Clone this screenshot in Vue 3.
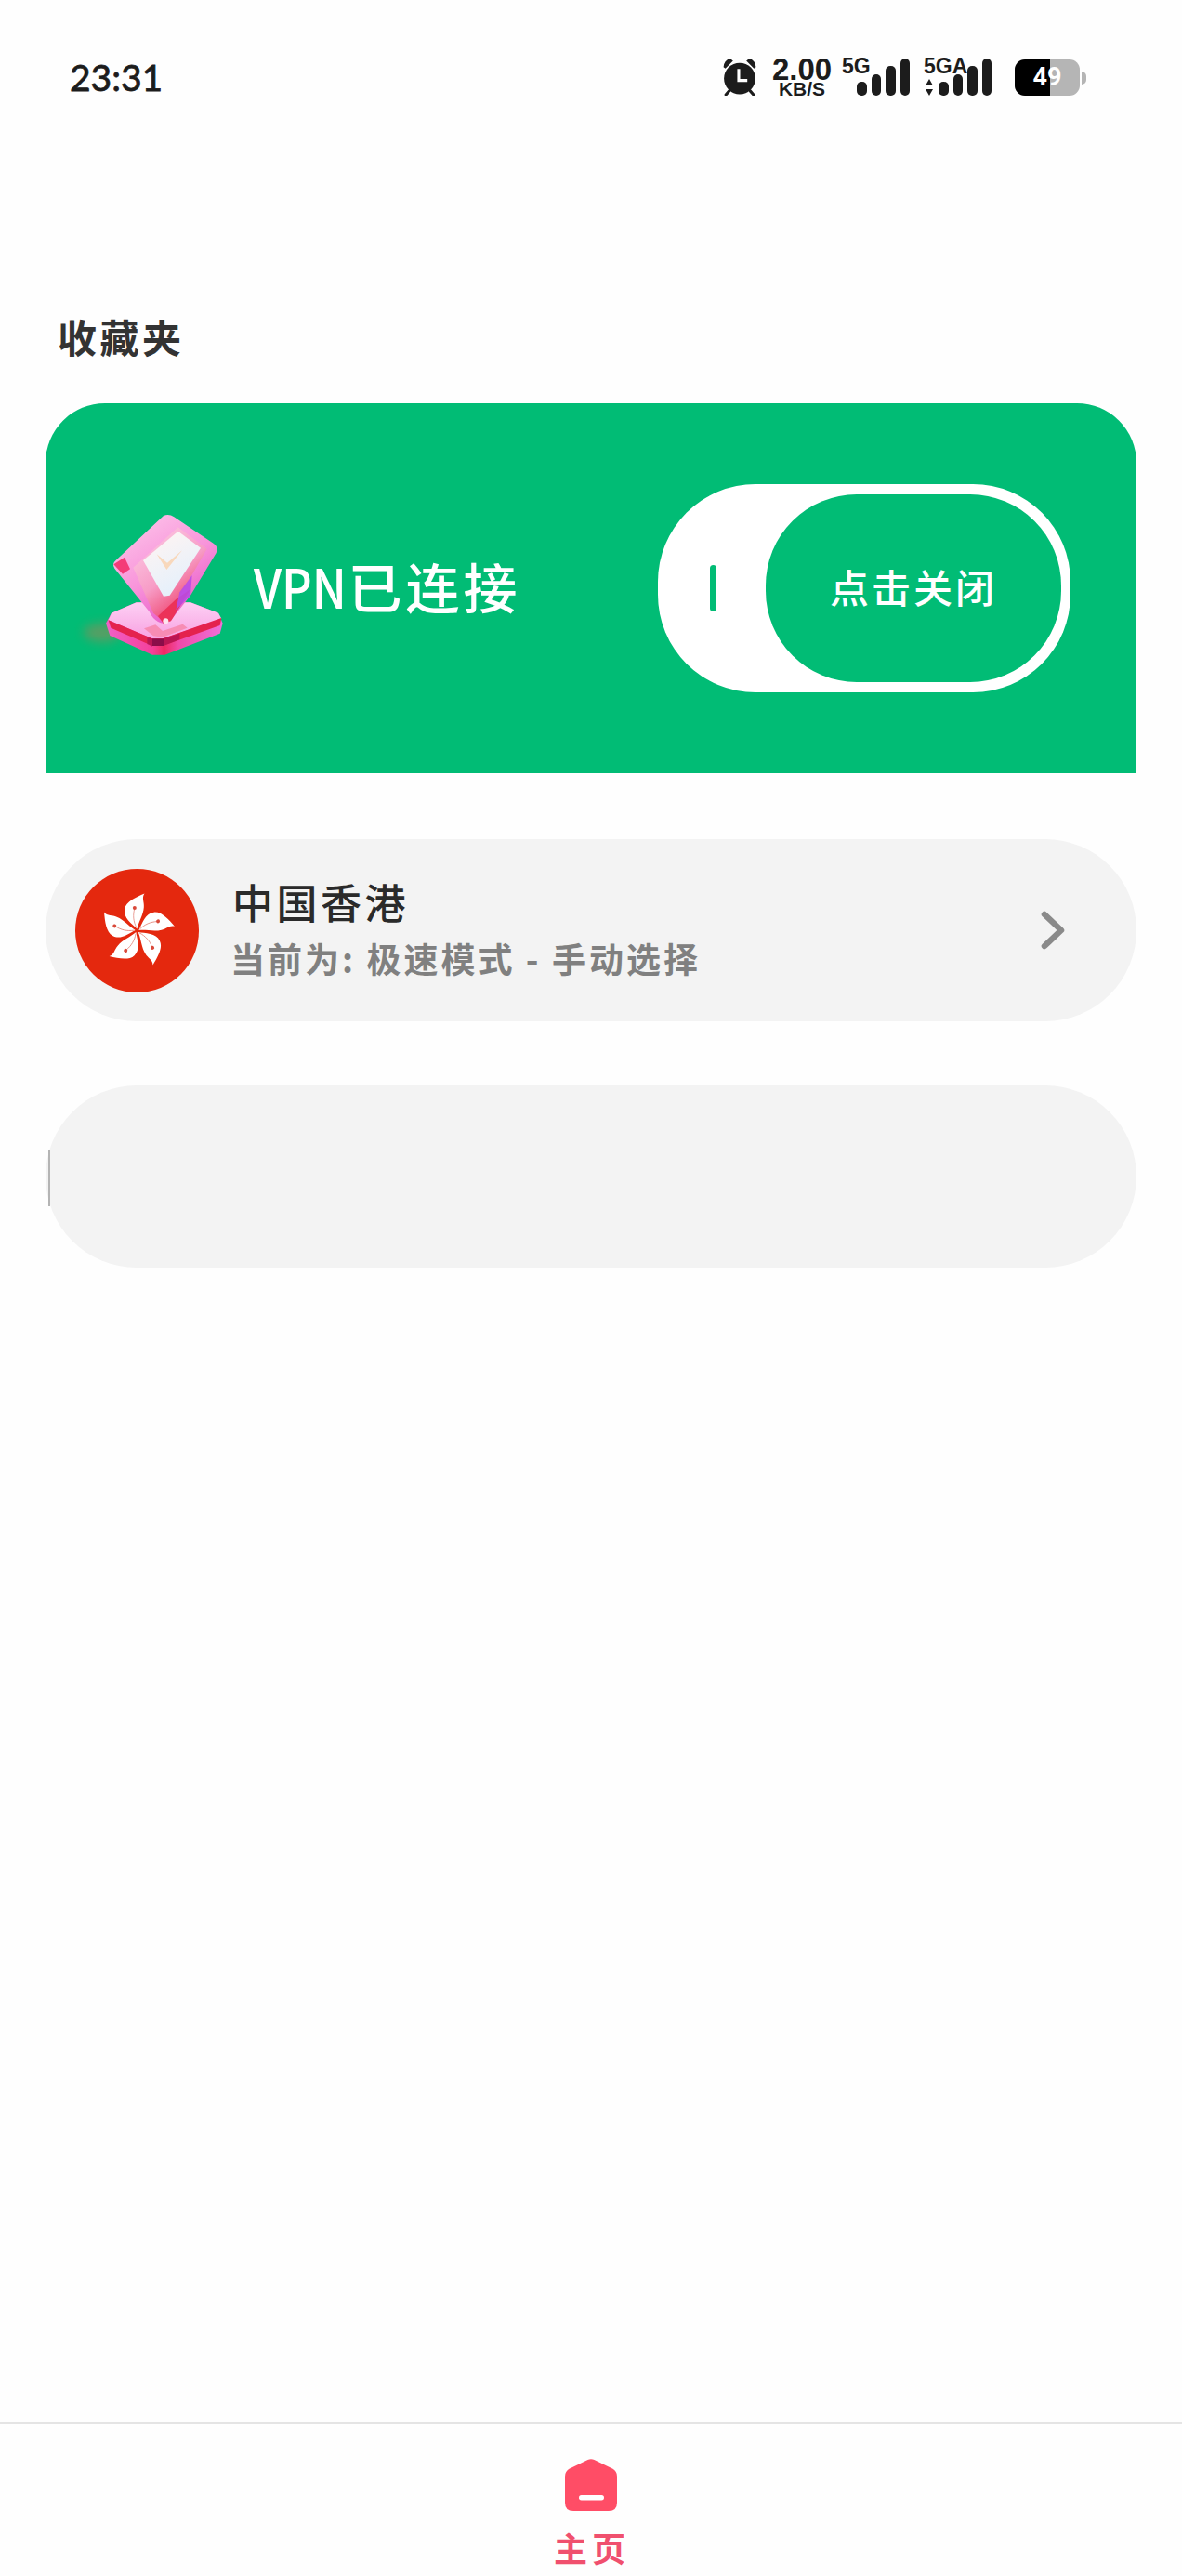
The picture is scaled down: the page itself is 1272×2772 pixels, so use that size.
<script setup>
const signals = [
  { label: '5G', arrows: false },
  { label: '5GA', arrows: true },
]
const barHeights = [15, 23, 32, 40]
const petals = [0, 72, 144, 216, 288]
</script>

<template>
  <div class="page">
    <header class="status">
      <span class="time">23:31</span>
      <div class="status-right">
        <!-- alarm -->
        <svg class="alarm" viewBox="0 0 36 40" width="38" height="41">
          <circle cx="18" cy="22" r="16.5" fill="#1c1c1c" />
          <path d="M1 10 Q1.5 3 8 1 L11 3.5 L3 11.5 Z M35 10 Q34.5 3 28 1 L25 3.5 L33 11.5 Z" fill="#1c1c1c" />
          <path d="M7 35 L3.5 39 M29 35 L32.5 39" stroke="#1c1c1c" stroke-width="3" stroke-linecap="round" />
          <path d="M17 12 V24 H26" fill="none" stroke="#fff" stroke-width="3" />
        </svg>
        <div class="speed">
          <span class="speed-num">2.00</span>
          <span class="speed-unit">KB/S</span>
        </div>
        <div v-for="s in signals" :key="s.label" class="signal">
          <span class="signal-label">{{ s.label }}</span>
          <svg v-if="s.arrows" class="arrows" viewBox="0 0 10 18" width="10" height="18">
            <path d="M5 0 L9 7 H1 Z M5 18 L9 11 H1 Z" fill="#1c1c1c" />
          </svg>
          <i v-for="h in barHeights" :key="h" class="bar" :style="{ height: h + 'px' }"></i>
        </div>
        <div class="battery">
          <div class="battery-body">
            <div class="battery-fill"></div>
            <span class="battery-text">49</span>
          </div>
          <i class="battery-nub"></i>
        </div>
      </div>
    </header>

    <h2 class="title">收藏夹</h2>

    <section class="vpn-card">
      <svg class="gem" viewBox="0 0 510 540" width="170" height="180">
        <defs>
          <linearGradient id="shieldG" x1="0.2" y1="0" x2="0.8" y2="1">
            <stop offset="0" stop-color="#fdc4ea" />
            <stop offset="0.5" stop-color="#f894da" />
            <stop offset="1" stop-color="#e44cc4" />
          </linearGradient>
          <linearGradient id="innerG" x1="0.1" y1="0" x2="0.7" y2="1">
            <stop offset="0" stop-color="#fdcfe8" />
            <stop offset="0.55" stop-color="#f79cc6" />
            <stop offset="1" stop-color="#ec3058" />
          </linearGradient>
          <linearGradient id="checkG" x1="0.2" y1="0" x2="0.7" y2="1">
            <stop offset="0" stop-color="#fff4f2" />
            <stop offset="1" stop-color="#e2f0fc" />
          </linearGradient>
          <linearGradient id="baseG" x1="0" y1="0" x2="0" y2="1">
            <stop offset="0" stop-color="#fdd0f4" />
            <stop offset="1" stop-color="#f8a2e2" />
          </linearGradient>
          <linearGradient id="sideG" x1="0" y1="0" x2="1" y2="0">
            <stop offset="0" stop-color="#f060c8" />
            <stop offset="0.4" stop-color="#f4409a" />
            <stop offset="0.5" stop-color="#ee2a62" />
            <stop offset="0.62" stop-color="#f04aa8" />
            <stop offset="1" stop-color="#f070d8" />
          </linearGradient>
          <filter id="soft" x="-50%" y="-50%" width="200%" height="200%">
            <feGaussianBlur stdDeviation="16" />
          </filter>
          <filter id="raster" x="-5%" y="-5%" width="110%" height="110%">
            <feGaussianBlur stdDeviation="2" />
          </filter>
        </defs>
        <ellipse cx="60" cy="425" rx="60" ry="30" fill="#c07a50" opacity="0.45" filter="url(#soft)" />
        <g filter="url(#raster)">
          <!-- base -->
          <path d="M72 395 L90 362 L170 328 L345 328 L435 362 L449 395 L440 428 L262 497 L222 497 L85 435 Z" fill="url(#sideG)" />
          <path d="M90 362 L170 328 L345 328 L435 362 L445 380 L255 445 L222 445 L80 385 Z" fill="url(#baseG)" />
          <path d="M80 385 L222 445 L255 445 L445 378 L440 402 L255 468 L222 468 L88 410 Z" fill="#e4204e" />
          <path d="M222 445 H258 V468 H222 Z" fill="#8a0a4a" />
          <path d="M205 442 L222 445 L222 470 L205 462 Z M258 445 L310 428 L310 448 L258 468 Z" fill="#a81456" opacity="0.7" />
          <!-- shield -->
          <path d="M258 48 Q275 40 292 52 L420 138 Q437 150 428 168 L345 305 L282 385 Q262 402 240 390 Q222 380 212 358 L100 218 Q90 204 104 192 Z" fill="url(#shieldG)" />
          <path d="M97 205 L132 182 L150 220 L126 236 Z" fill="#f43a78" />
          <path d="M160 215 L305 85 L398 155 L300 325 L252 385 L225 362 Z" fill="url(#innerG)" />
          <path d="M345 285 L282 388 L258 396 L240 372 L298 318 Z" fill="#ec3058" />
          <path d="M350 240 L345 305 L298 352 L310 295 Z" fill="#b84ce4" opacity="0.9" />
          <path d="M192 192 L305 98 L378 152 L278 305 L258 308 Z" fill="url(#checkG)" />
          <path d="M236 172 L268 222 L318 160 L270 200 Z" fill="#f8d8bc" />
          <circle cx="265" cy="388" r="9" fill="#fde4ee" />
          <path d="M195 412 L232 400 L255 420 L320 398 L335 410 L255 440 L225 436 Z" fill="#f78cb4" />
        </g>
      </svg>
      <span class="vpn-text"><span class="vpn-latin">VPN</span>已连接</span>
      <div class="toggle">
        <i class="toggle-mark"></i>
        <div class="toggle-knob"><span class="toggle-label">点击关闭</span></div>
      </div>
    </section>

    <section class="row">
      <svg class="flag" viewBox="-200 -200 400 400" width="133" height="133">
        <circle r="200" fill="#e4280e" />
        <g v-for="p in petals" :key="p" :transform="`rotate(${p})`">
          <path d="M0 -6 C-16 -22 -46 -42 -40 -70 C-36 -94 -4 -108 24 -120 C14 -106 24 -92 22 -76 C20 -50 6 -32 0 -6 Z" fill="#fff" />
          <path d="M-2 -10 C-12 -30 -14 -50 -8 -72" fill="none" stroke="#e58a80" stroke-width="2.5" />
          <circle cx="-8" cy="-74" r="6" fill="#d9493a" />
        </g>
      </svg>
      <div class="row-text">
        <span class="row-title">中国香港</span>
        <span class="row-sub">当前为: 极速模式 - 手动选择</span>
      </div>
      <svg class="chevron" viewBox="0 0 30 42" width="30" height="42">
        <path d="M5 4 L23 21 L5 38" fill="none" stroke="#8a8a8a" stroke-width="6.5" stroke-linecap="round" stroke-linejoin="round" />
      </svg>
    </section>

    <section class="row row-empty">
      <i class="empty-cursor"></i>
    </section>

    <nav class="tabbar">
      <svg viewBox="0 0 56 56" width="56" height="56">
        <path d="M24.5 0.9 Q28 -0.6 31.5 0.9 L51 10.5 Q56 13 56 19 V47 Q56 56 47 56 H9 Q0 56 0 47 V19 Q0 13 5 10.5 Z" fill="#ff4d66" />
        <rect x="15" y="39" width="27" height="5.5" rx="2.7" fill="#fff" />
      </svg>
      <span class="tab-label">主页</span>
    </nav>
  </div>
</template>

<style scoped>
.page {
  width: 1272px;
  height: 2772px;
  display: flex;
  flex-direction: column;
  background: #fefefe;
  font-family: "Noto Sans CJK SC", "Noto Sans", sans-serif;
  overflow: hidden;
}

.status {
  height: 166px;
  flex-shrink: 0;
  display: flex;
  align-items: center;
  justify-content: space-between;
  padding: 0 103px 0 75px;
  color: #1c1c1c;
}

.time {
  font-family: Lato, sans-serif;
  font-size: 39px;
  font-weight: 400;
  -webkit-text-stroke: 0.8px #1c1c1c;
}

.status-right {
  display: flex;
  align-items: flex-end;
  height: 40px;
}

.alarm {
  display: block;
}

.speed {
  margin-left: 14px;
  width: 68px;
  height: 40px;
  display: flex;
  flex-direction: column;
  align-items: center;
  font-family: "Liberation Sans", sans-serif;
  font-weight: 700;
}

.speed-num {
  font-size: 33px;
  line-height: 24px;
}

.speed-unit {
  font-size: 21px;
  line-height: 17px;
}

.signal {
  position: relative;
  width: 73px;
  height: 40px;
  margin-left: 9px;
  display: flex;
  align-items: flex-end;
  justify-content: flex-end;
  gap: 5px;
}

.signal + .signal {
  margin-left: 15px;
}

.signal-label {
  position: absolute;
  left: 0;
  top: -3px;
  font-family: "Liberation Sans", sans-serif;
  font-weight: 700;
  font-size: 23px;
  line-height: 22px;
}

.arrows {
  position: absolute;
  left: 1px;
  bottom: 0;
}

.bar {
  display: block;
  width: 10.5px;
  background: #1c1c1c;
  border-radius: 5px;
}

.battery {
  margin-left: 25px;
  display: flex;
  align-items: center;
}

.battery-body {
  position: relative;
  width: 70px;
  height: 39px;
  border-radius: 11px;
  background: #b5b5b5;
  overflow: hidden;
}

.battery-fill {
  width: 38px;
  height: 100%;
  background: #000;
}

.battery-text {
  position: absolute;
  inset: 0;
  text-align: center;
  line-height: 39px;
  font-family: Roboto, sans-serif;
  font-weight: 700;
  font-size: 27px;
  color: #fff;
}

.battery-nub {
  display: block;
  width: 5px;
  height: 14px;
  margin-left: 2px;
  background: #b5b5b5;
  border-radius: 0 5px 5px 0;
}

.title {
  margin: 174px 0 0 62px;
  font-size: 42px;
  line-height: 44px;
  font-weight: 700;
  letter-spacing: 3.5px;
  color: #333;
}

.vpn-card {
  margin: 50px 49px 0;
  height: 398px;
  flex-shrink: 0;
  display: flex;
  align-items: center;
  padding: 0 71px 0 41px;
  background: #01bc75;
  border-radius: 64px 64px 0 0;
  color: #fff;
}

.gem {
  flex-shrink: 0;
  margin-top: -8px;
  overflow: visible;
}

.vpn-text {
  margin-left: 13px;
  margin-top: -6px;
  font-size: 58px;
  font-weight: 500;
  letter-spacing: 4px;
  white-space: nowrap;
}

.vpn-latin {
  display: inline-block;
  transform: scaleX(0.87);
  transform-origin: left center;
  margin-right: -13px;
  letter-spacing: 0;
}

.toggle {
  margin-left: auto;
  width: 444px;
  height: 224px;
  display: flex;
  align-items: center;
  justify-content: space-between;
  padding: 0 10px 0 56px;
  box-sizing: border-box;
  background: #fff;
  border-radius: 105px;
}

.toggle-mark {
  display: block;
  width: 7px;
  height: 50px;
  border-radius: 4px;
  background: #01bc75;
}

.toggle-knob {
  width: 318px;
  height: 202px;
  display: flex;
  align-items: center;
  justify-content: center;
  background: #01bc75;
  border-radius: 98px;
  font-size: 42px;
  font-weight: 500;
  letter-spacing: 3px;
}

.toggle-label {
  margin-top: -6px;
}

.row {
  margin: 71px 49px 0;
  height: 196px;
  flex-shrink: 0;
  display: flex;
  align-items: center;
  padding: 0 74px 0 32px;
  background: #f3f3f3;
  border-radius: 98px;
}

.row-empty {
  position: relative;
  margin-top: 69px;
}

.empty-cursor {
  position: absolute;
  left: 3px;
  top: 69px;
  width: 2px;
  height: 61px;
  background: #b4b4b4;
}

.flag {
  flex-shrink: 0;
}

.row-text {
  margin-left: 36px;
  display: flex;
  flex-direction: column;
}

.row-title {
  margin-top: -8px;
  font-size: 44px;
  line-height: 60px;
  letter-spacing: 3.5px;
  font-weight: 500;
  color: #2a2a2a;
}

.row-sub {
  margin-top: 8px;
  margin-left: -2px;
  font-size: 37px;
  line-height: 46px;
  letter-spacing: 3px;
  font-weight: 700;
  color: #808080;
}

.chevron {
  margin-left: auto;
}

.tabbar {
  margin-top: auto;
  height: 166px;
  flex-shrink: 0;
  box-sizing: border-box;
  border-top: 2px solid #e4e4e4;
  padding-top: 38px;
  display: flex;
  flex-direction: column;
  align-items: center;
}

.tab-label {
  margin-top: 16px;
  margin-left: 2px;
  font-size: 36px;
  line-height: 46px;
  letter-spacing: 5px;
  font-weight: 700;
  color: #f0506e;
}
</style>

<style>
html, body {
  margin: 0;
  background: #fefefe;
}
</style>
